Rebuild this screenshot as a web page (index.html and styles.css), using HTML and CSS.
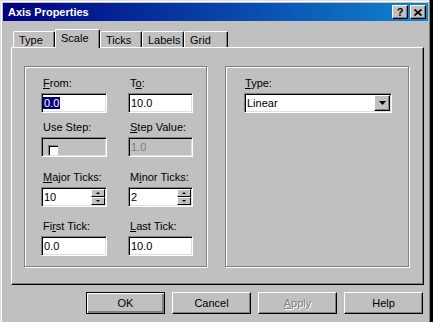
FILE: index.html
```html
<!DOCTYPE html>
<html lang="en">
<head>
    <meta charset="UTF-8">
    <title>Axis Properties</title>
    <link rel="stylesheet" href="styles.css">
</head>
<body>

<div class="window">
    <div class="titlebar">
        <span class="title">Axis Properties</span>
        <div class="caption-btns">
            <span class="cbtn help">?</span>
            <span class="cbtn">
                <svg width="8" height="7" viewBox="0 0 8 7"><path d="M0.5 0.5 L7.5 6.5 M7.5 0.5 L0.5 6.5" stroke="#000" stroke-width="1.7"/></svg>
            </span>
        </div>
    </div>

    <div class="tabs">
        <div class="tab tab-type">Type</div>
        <div class="tab tab-scale active">Scale</div>
        <div class="tab tab-ticks">Ticks</div>
        <div class="tab tab-labels">Labels</div>
        <div class="tab tab-grid">Grid</div>
    </div>

    <div class="panel">
        <div class="group group-left">
            <div class="row row-1">
                <div class="field">
                    <label><u>F</u>rom:</label>
                    <div class="edit"><span class="selected">0.0</span></div>
                </div>
                <div class="field field-2">
                    <label>T<u>o</u>:</label>
                    <div class="edit">10.0</div>
                </div>
            </div>
            <div class="row row-2">
                <div class="field">
                    <label>Use Step:</label>
                    <div class="edit disabled"><span class="check"></span></div>
                </div>
                <div class="field field-2">
                    <label><u>S</u>tep Value:</label>
                    <div class="edit disabled grey-text">1.0</div>
                </div>
            </div>
            <div class="row row-3">
                <div class="field">
                    <label><u>M</u>ajor Ticks:</label>
                    <div class="edit spin">10
                        <span class="spinner"><span class="sp sp-up"></span><span class="sp sp-down"></span></span>
                    </div>
                </div>
                <div class="field field-2">
                    <label>M<u>i</u>nor Ticks:</label>
                    <div class="edit spin">2
                        <span class="spinner"><span class="sp sp-up"></span><span class="sp sp-down"></span></span>
                    </div>
                </div>
            </div>
            <div class="row row-4">
                <div class="field">
                    <label>Fi<u>r</u>st Tick:</label>
                    <div class="edit">0.0</div>
                </div>
                <div class="field field-2">
                    <label><u>L</u>ast Tick:</label>
                    <div class="edit">10.0</div>
                </div>
            </div>
        </div>

        <div class="group group-right">
            <label class="type-label"><u>T</u>ype:</label>
            <div class="edit combo">Linear
                <span class="drop-btn">
                    <svg width="7" height="4" viewBox="0 0 7 4"><path d="M0 0 H7 L3.5 4 Z" fill="#000"/></svg>
                </span>
            </div>
        </div>
    </div>

    <div class="buttons">
        <div class="btn default"><span>OK</span></div>
        <div class="btn"><span>Cancel</span></div>
        <div class="btn disabled"><span><u>A</u>pply</span></div>
        <div class="btn"><span>Help</span></div>
    </div>
</div>

</body>
</html>
```

FILE: styles.css
```css
/* Win98 style dialog */
body {
    margin: 0;
    background-color: #000;
    font-family: "Liberation Sans", Arial, sans-serif;
    font-size: 11px;
    color: #000;
}

.window {
    width: 430px;
    height: 322px;
    box-sizing: border-box;
    background-color: #c0c0c0;
    padding: 3px 1px 0 3px;
    border-right: 1px solid #808080;
    box-shadow: inset 1px 1px #dfdfdf, inset 2px 2px #fff;
}

/* title bar */
.titlebar {
    height: 18px;
    display: flex;
    align-items: center;
    justify-content: space-between;
    background: linear-gradient(to right, #000080, #1084d0);
}

.title {
    color: #fff;
    font-weight: bold;
    font-size: 11px;
    padding-left: 5px;
}

.caption-btns {
    display: flex;
    gap: 2px;
    padding-right: 2px;
}

.cbtn {
    width: 16px;
    height: 14px;
    box-sizing: border-box;
    background-color: #c0c0c0;
    border-top: 1px solid #fff;
    border-left: 1px solid #fff;
    border-right: 1px solid #000;
    border-bottom: 1px solid #000;
    box-shadow: inset -1px -1px #808080;
    display: flex;
    align-items: center;
    justify-content: center;
    font-weight: bold;
    font-size: 11px;
    line-height: 1;
}

/* tabs */
.tabs {
    display: flex;
    align-items: flex-end;
    height: 19px;
    margin-top: 8px;
    margin-bottom: -1px;
    padding-left: 10px;
    position: relative;
    z-index: 1;
}

.tab {
    height: 16px;
    box-sizing: border-box;
    margin-bottom: 1px;
    padding: 2px 0 0 5px;
    border-top: 1px solid #fff;
    border-left: 1px solid #fff;
    border-right: 1px solid #000;
    border-radius: 2px 2px 0 0;
    box-shadow: inset -1px 0 #808080;
    background-color: #c0c0c0;
}

.tab-type { width: 42px; }
.tab-scale { width: 45px; }
.tab-ticks { width: 42px; }
.tab-labels { width: 42px; }
.tab-grid { width: 44px; }

.tab.active {
    height: 19px;
    margin-bottom: 0;
    padding-top: 2px;
}

/* tab page */
.panel {
    height: 238px;
    box-sizing: border-box;
    margin: 0 4px 0 8px;
    padding: 18px 0 0 12px;
    border-top: 1px solid #fff;
    border-left: 1px solid #fff;
    border-right: 1px solid #000;
    border-bottom: 1px solid #000;
    box-shadow: inset -1px -1px #808080;
    display: grid;
    grid-template-columns: 183px 184px;
    column-gap: 18px;
    align-items: start;
}

.group {
    height: 201px;
    box-sizing: border-box;
    border: 1px solid #808080;
    box-shadow: inset 1px 1px #fff, 1px 1px #fff;
}

.group-left {
    padding: 10px 0 0 16px;
}

.row {
    display: flex;
    gap: 21px;
}

.row-2 { margin-top: 8px; }
.row-3 { margin-top: 14px; }
.row-4 { margin-top: 13px; }

.field {
    width: 66px;
}

.field-2 {
    width: 65px;
}

label {
    display: block;
    height: 13px;
    line-height: 13px;
    padding-left: 2px;
    margin-bottom: 3px;
}

.edit {
    position: relative;
    height: 20px;
    box-sizing: border-box;
    background-color: #fff;
    border-top: 1px solid #808080;
    border-left: 1px solid #808080;
    border-right: 1px solid #fff;
    border-bottom: 1px solid #fff;
    box-shadow: inset 1px 1px #000, inset -1px -1px #dfdfdf;
    padding: 3px 0 0 2px;
    line-height: 13px;
    white-space: nowrap;
}

.edit .selected {
    background-color: #000080;
    color: #fff;
    margin-left: -1px;
    padding: 0 1px;
}

.edit.disabled {
    background-color: #c0c0c0;
}

.grey-text {
    color: #808080;
}

.check {
    position: absolute;
    left: 6px;
    top: 7px;
    width: 10px;
    height: 10px;
    box-sizing: border-box;
    background-color: #fff;
    border-top: 1px solid #808080;
    border-left: 1px solid #808080;
    box-shadow: inset 1px 1px #000;
}

/* spin buttons */
.spinner {
    position: absolute;
    right: 1px;
    top: 1px;
    width: 14px;
    height: 16px;
    display: flex;
    flex-direction: column;
}

.sp {
    flex: 1;
    box-sizing: border-box;
    background-color: #c0c0c0;
    border-top: 1px solid #fff;
    border-left: 1px solid #fff;
    border-right: 1px solid #000;
    border-bottom: 1px solid #000;
    display: flex;
    align-items: center;
    justify-content: center;
}

.sp::after {
    content: "";
    width: 0;
    height: 0;
    border-left: 2px solid transparent;
    border-right: 2px solid transparent;
}

.sp-up::after {
    border-bottom: 2px solid #000;
}

.sp-down::after {
    border-top: 2px solid #000;
}

/* right group */
.group-right {
    padding: 10px 0 0 18px;
}

.type-label {
    padding-left: 1px;
}

.combo {
    width: 148px;
}

.drop-btn {
    position: absolute;
    right: 1px;
    top: 1px;
    width: 16px;
    height: 16px;
    box-sizing: border-box;
    background-color: #c0c0c0;
    border-top: 1px solid #fff;
    border-left: 1px solid #fff;
    border-right: 1px solid #000;
    border-bottom: 1px solid #000;
    box-shadow: inset -1px -1px #808080;
    display: flex;
    align-items: center;
    justify-content: center;
}

/* dialog buttons */
.buttons {
    display: flex;
    justify-content: flex-end;
    gap: 7px;
    margin-top: 7px;
    padding-right: 5px;
}

.btn {
    width: 79px;
    height: 22px;
    box-sizing: border-box;
    border-top: 1px solid #fff;
    border-left: 1px solid #fff;
    border-right: 1px solid #000;
    border-bottom: 1px solid #000;
    box-shadow: inset -1px -1px #808080;
    display: flex;
    align-items: center;
    justify-content: center;
}

.btn.default {
    border: 1px solid #000;
    box-shadow: inset 1px 1px #fff, inset -2px -2px #808080, inset -1px -1px #000;
}

.btn.disabled {
    color: #808080;
    text-shadow: 1px 1px #fff;
}
```
